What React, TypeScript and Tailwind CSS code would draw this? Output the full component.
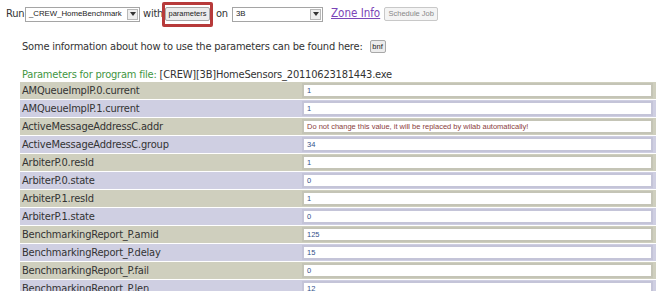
const PARAMS: { name: string; value: string; warn?: boolean }[] = [
  { name: "AMQueueImplP.0.current", value: "1" },
  { name: "AMQueueImplP.1.current", value: "1" },
  { name: "ActiveMessageAddressC.addr", value: "Do not change this value, it will be replaced by wilab automatically!", warn: true },
  { name: "ActiveMessageAddressC.group", value: "34" },
  { name: "ArbiterP.0.resId", value: "1" },
  { name: "ArbiterP.0.state", value: "0" },
  { name: "ArbiterP.1.resId", value: "1" },
  { name: "ArbiterP.1.state", value: "0" },
  { name: "BenchmarkingReport_P.amid", value: "125" },
  { name: "BenchmarkingReport_P.delay", value: "15" },
  { name: "BenchmarkingReport_P.fail", value: "0" },
  { name: "BenchmarkingReport_P.len", value: "12" },
];

function Select({ label, width }: { label: string; width: string }) {
  return (
    <div className={`flex h-[15px] items-center border border-[#a5a5a5] bg-white ${width}`}>
      <span className="flex-1 truncate pl-[3px] font-['Liberation_Sans',sans-serif] text-[7.8px] leading-none tracking-normal text-[#222]">
        {label}
      </span>
      <span className="m-[1px] flex h-[11px] w-[11px] items-center justify-center border border-[#b8b8b8] bg-[#eeeeee]">
        <svg width="6" height="4" viewBox="0 0 6 4">
          <path d="M0 0h6L3 4z" fill="#333" />
        </svg>
      </span>
    </div>
  );
}

export default function App() {
  return (
    <div className="h-[291px] w-[663px] overflow-hidden bg-white font-['DejaVu_Sans_Condensed','DejaVu_Sans',sans-serif] text-[11px] tracking-[-0.2px] text-[#333]">
      {/* Run bar */}
      <div className="flex h-[27px] items-center pl-[6px] pt-[1px]">
        <span className="w-[19px]">Run</span>
        <Select label="_CREW_HomeBenchmark" width="w-[115px]" />
        <span className="ml-[3px] w-[19px]">with</span>
        <div className="flex h-[25px] w-[51px] items-center justify-center rounded-[2px] border-[3px] border-[#b73a3a]">
          <button className="h-[14px] rounded-[2px] border border-[#a8a8a8] bg-[#ececec] px-[3px] font-['Liberation_Sans',sans-serif] text-[7.5px] leading-none tracking-normal text-[#222]">
            parameters
          </button>
        </div>
        <span className="ml-[3px] w-[16px]">on</span>
        <Select label="3B" width="w-[91px]" />
        <a className="ml-[8px] text-[11.5px] tracking-normal text-[#7b44b8] underline">Zone Info</a>
        <button className="ml-[4px] h-[14px] w-[54px] rounded-[2px] border border-[#c8c8c8] bg-[#f4f4f4] font-['Liberation_Sans',sans-serif] text-[7.5px] leading-none tracking-normal text-[#888]">
          Schedule Job
        </button>
      </div>

      {/* Info line */}
      <div className="mt-[13px] flex items-center pl-[22px] leading-none">
        <span>Some information about how to use the parameters can be found here:</span>
        <button className="ml-[7px] h-[13px] w-[16px] rounded-[2px] border border-[#a8a8a8] bg-[#ececec] font-['Liberation_Sans',sans-serif] text-[7.5px] leading-none tracking-normal text-[#222]">
          bnf
        </button>
      </div>

      {/* Parameters table */}
      <div className="mt-[16px] pl-[22px] leading-none">
        <span className="text-[#3f963f]">Parameters for program file: </span>
        <span>[CREW][3B]HomeSensors_20110623181443.exe</span>
      </div>
      <div className="ml-[20px] mt-[2px] flex w-[636px] flex-col gap-[1px] leading-none">
        {PARAMS.map((p, i) => (
          <div
            key={p.name}
            className={`flex h-[17px] shrink-0 items-center ${i % 2 === 0 ? "bg-[#cfcfbe]" : "bg-[#cfcfe2]"}`}
          >
            <div className="w-[282px] pl-[2px]">{p.name}</div>
            <div
              className={`mr-[3px] flex h-[15px] flex-1 items-center border-2 bg-white pl-[3px] font-['Liberation_Sans',sans-serif] text-[7.5px] leading-none tracking-normal ${
                i % 2 === 0 ? "border-[#c4c4b6]" : "border-[#c4c4d8]"
              } ${p.warn ? "text-[#8a4040]" : "text-[#33508a]"}`}
            >
              {p.value}
            </div>
          </div>
        ))}
      </div>
    </div>
  );
}
